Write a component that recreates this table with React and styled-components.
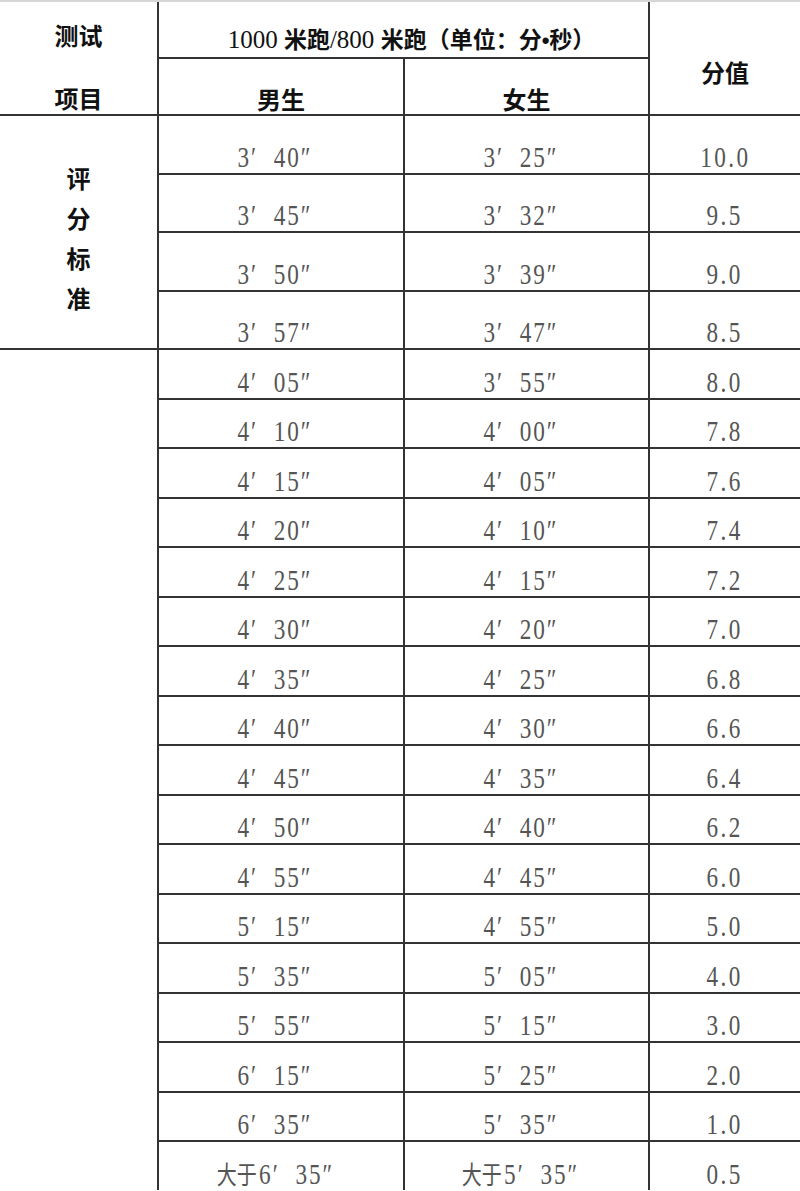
import React from 'react';
import styled, { createGlobalStyle } from 'styled-components';

const GlobalStyle = createGlobalStyle`
  html, body {
    margin: 0;
    padding: 0;
    background: #fff;
  }
  body {
    font-family: "Liberation Serif", "Noto Sans CJK SC", serif;
  }
`;

const Table = styled.div`
  width: 800px;
  display: grid;
  grid-template-columns: 157px 244px 243px 1fr;
  grid-template-rows: 55px 55px repeat(4, 56.5px) repeat(17, 47.5px);
  gap: 2px;
  background: #333;
  border-top: 2px solid #d6d6d6;
  overflow: hidden;
`;

const Cell = styled.div`
  background: #fff;
  display: flex;
  justify-content: center;
  align-items: ${props => props.align || 'flex-end'};
  grid-column: ${props => props.col || 'auto'};
  grid-row: ${props => props.row || 'auto'};
  padding-right: ${props => props.shift || 0}px;
  padding-left: ${props => props.lead || 0}px;
  padding-top: ${props => props.top || 0}px;
  padding-bottom: ${props => props.bottom || 0}px;
  box-sizing: border-box;
`;

const HeadText = styled.span`
  font-family: "Noto Sans CJK SC", sans-serif;
  font-weight: 700;
  font-size: 24px;
  line-height: 30px;
  color: #111;
`;

const TitleText = styled.span`
  font-weight: 700;
  font-size: 24px;
  line-height: 30px;
  color: #111;
  white-space: nowrap;
`;

const TitleDigits = styled.span`
  font-family: "Liberation Serif", serif;
  font-weight: 400;
  font-size: 25px;
`;

const TitleHan = styled.span`
  font-family: "Noto Sans CJK SC", sans-serif;
  font-weight: 700;
  font-size: 23px;
`;

const TitleBullet = styled.span`
  font-family: "Liberation Sans", sans-serif;
  font-weight: 700;
  font-size: 22px;
`;

const StackedLabel = styled.div`
  display: flex;
  flex-direction: column;
  align-items: center;
  gap: ${props => props.gap}px;
`;

const Value = styled.span`
  display: inline-block;
  font-family: "Liberation Serif", serif;
  font-size: 29px;
  line-height: 29px;
  color: #555;
  white-space: pre;
  transform: scaleX(0.8);
  letter-spacing: ${props => props.spacing || 0}px;
`;

const Prefix = styled.span`
  font-family: "Noto Sans CJK SC", sans-serif;
  font-size: 25px;
  letter-spacing: 0;
  margin-right: 3px;
`;

const topRows = [
  ['3′  40″', '3′  25″', '10.0'],
  ['3′  45″', '3′  32″', '9.5'],
  ['3′  50″', '3′  39″', '9.0'],
  ['3′  57″', '3′  47″', '8.5'],
];

const restRows = [
  ['4′  05″', '3′  55″', '8.0'],
  ['4′  10″', '4′  00″', '7.8'],
  ['4′  15″', '4′  05″', '7.6'],
  ['4′  20″', '4′  10″', '7.4'],
  ['4′  25″', '4′  15″', '7.2'],
  ['4′  30″', '4′  20″', '7.0'],
  ['4′  35″', '4′  25″', '6.8'],
  ['4′  40″', '4′  30″', '6.6'],
  ['4′  45″', '4′  35″', '6.4'],
  ['4′  50″', '4′  40″', '6.2'],
  ['4′  55″', '4′  45″', '6.0'],
  ['5′  15″', '4′  55″', '5.0'],
  ['5′  35″', '5′  05″', '4.0'],
  ['5′  55″', '5′  15″', '3.0'],
  ['6′  15″', '5′  25″', '2.0'],
  ['6′  35″', '5′  35″', '1.0'],
  [{ prefix: '大于', time: '6′  35″' }, { prefix: '大于', time: '5′  35″' }, '0.5'],
];

const TimeCell = ({ value }) => (
  <Cell shift={12} bottom={1}>
    {typeof value === 'string' ? (
      <Value spacing={2.5}>{value}</Value>
    ) : (
      <Value spacing={2.5}>
        <Prefix>{value.prefix}</Prefix>
        {value.time}
      </Value>
    )}
  </Cell>
);

const ScoreCell = ({ value }) => (
  <Cell bottom={1}>
    <Value spacing={3}>{value}</Value>
  </Cell>
);

const App = () => (
  <>
    <GlobalStyle />
    <Table>
      <Cell col="1" row="1 / span 2" align="flex-start" top={18}>
        <StackedLabel gap={33}>
          <HeadText>测试</HeadText>
          <HeadText>项目</HeadText>
        </StackedLabel>
      </Cell>
      <Cell col="2 / span 2" row="1" bottom={1} lead={16}>
        <TitleText>
          <TitleDigits>1000 </TitleDigits>
          <TitleHan>米跑</TitleHan>
          <TitleDigits>/800 </TitleDigits>
          <TitleHan>米跑（单位：分</TitleHan>
          <TitleBullet>•</TitleBullet>
          <TitleHan>秒）</TitleHan>
        </TitleText>
      </Cell>
      <Cell col="4" row="1 / span 2" align="flex-start" top={55}>
        <HeadText>分值</HeadText>
      </Cell>
      <Cell col="2" row="2" bottom={0}>
        <HeadText>男生</HeadText>
      </Cell>
      <Cell col="3" row="2" bottom={0}>
        <HeadText>女生</HeadText>
      </Cell>
      <Cell col="1" row="3 / span 4" align="center" top={12}>
        <StackedLabel gap={10}>
          {['评', '分', '标', '准'].map(ch => (
            <HeadText key={ch}>{ch}</HeadText>
          ))}
        </StackedLabel>
      </Cell>
      <Cell col="1" row="7 / span 17" />
      {[...topRows, ...restRows].map((row, i) => (
        <React.Fragment key={i}>
          <TimeCell value={row[0]} />
          <TimeCell value={row[1]} />
          <ScoreCell value={row[2]} />
        </React.Fragment>
      ))}
    </Table>
  </>
);

export default App;
